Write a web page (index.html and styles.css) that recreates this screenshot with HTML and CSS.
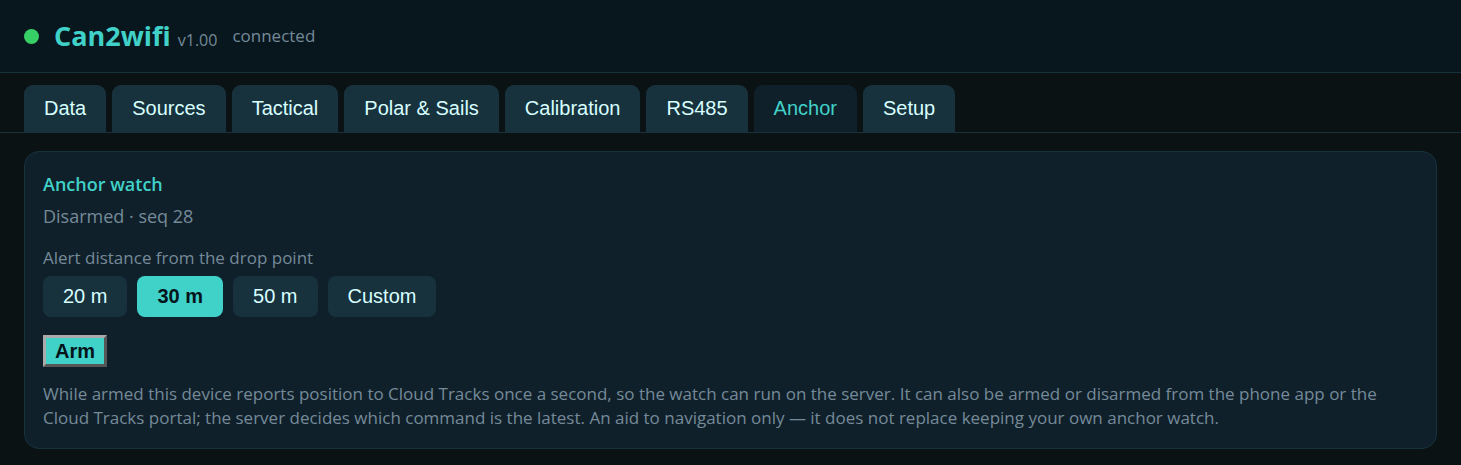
FILE: index.html
```
<!DOCTYPE html>
<html lang="en">
<head>
    <meta charset="UTF-8">
    <meta name="viewport" content="width=device-width, initial-scale=1.0">
    <title>Can2wifi</title>
    <link rel="stylesheet" href="styles.css">
</head>
<body>
    <header>
        <span class="dot"></span>
        <h1>Can2wifi <small>v1.00</small></h1>
        <span class="status">connected</span>
    </header>

    <nav class="tabs">
        <button type="button">Data</button>
        <button type="button">Sources</button>
        <button type="button">Tactical</button>
        <button type="button">Polar &amp; Sails</button>
        <button type="button">Calibration</button>
        <button type="button">RS485</button>
        <button type="button" class="active">Anchor</button>
        <button type="button">Setup</button>
    </nav>

    <main>
        <section class="card">
            <h2>Anchor watch</h2>
            <p class="state">Disarmed · seq 28</p>
            <p class="label" id="radiusLabel">Alert distance from the drop point</p>
            <div class="radius" role="group" aria-labelledby="radiusLabel">
                <button type="button">20 m</button>
                <button type="button" class="active">30 m</button>
                <button type="button">50 m</button>
                <button type="button">Custom</button>
            </div>
            <button type="button" class="arm">Arm</button>
            <p class="note">While armed this device reports position to Cloud Tracks once a second, so the watch can run on the server. It can also be armed or disarmed from the phone app or the Cloud Tracks portal; the server decides which command is the latest. An aid to navigation only — it does not replace keeping your own anchor watch.</p>
        </section>
    </main>

    <script>
        // One active button per group
        document.querySelectorAll('.tabs, .radius').forEach(group => {
            group.addEventListener('click', event => {
                if (event.target.tagName !== 'BUTTON') return;
                group.querySelector('.active').classList.remove('active');
                event.target.classList.add('active');
            });
        });
    </script>
</body>
</html>
```
FILE: styles.css
```
* {
    box-sizing: border-box;
}

body {
    margin: 0;
    background: #0a1214;
    color: #d8ffff;
    font-family: "Segoe UI", "Open Sans", sans-serif;
    font-size: 17px;
    line-height: 24px;
}

h1, h2, p {
    margin: 0;
}

header {
    display: flex;
    align-items: center;
    gap: 15px;
    padding: 18px 24px;
    background: #08171e;
    border-bottom: 1px solid #17323d;
}

.dot {
    width: 15px;
    height: 15px;
    border-radius: 50%;
    background: #37d067;
}

h1 {
    font-size: 27px;
    line-height: 36px;
    color: #40d1c9;
}

h1 small {
    font-size: 16px;
    line-height: 16px;
    font-weight: normal;
    color: #758a99;
}

.status, .state, .label, .note {
    color: #758a99;
}

button {
    font-family: Arial, "Liberation Sans", sans-serif;
    font-size: 20px;
    line-height: 23px;
    cursor: pointer;
}

.tabs {
    display: flex;
    flex-wrap: wrap;
    gap: 6px;
    padding: 12px 24px 0;
    border-bottom: 1px solid #17323d;
}

.tabs button {
    padding: 12px 20px;
    border: none;
    border-radius: 9px 9px 0 0;
    background: #17323d;
    color: #d8ffff;
}

.tabs .active {
    background: #10202a;
    color: #40d1c9;
}

main {
    padding: 18px 24px 16px;
}

.card {
    padding: 18px;
    background: #10202a;
    border: 1px solid #17323d;
    border-radius: 15px;
}

h2 {
    font-size: 18px;
    line-height: 28px;
    font-weight: 600;
    color: #40d1c9;
}

.state {
    font-size: 18px;
    line-height: 36px;
}

.label {
    margin-top: 12px;
}

.radius {
    display: flex;
    flex-wrap: wrap;
    gap: 10px;
    margin: 6px 0 18px;
}

.radius button {
    padding: 9px 20px;
    border: none;
    border-radius: 8px;
    background: #17323d;
    color: #d8ffff;
}

.radius .active {
    background: #40d1c9;
    color: #04141a;
    font-weight: bold;
}

.arm {
    padding: 2px 9px;
    border: 3px outset #aaa;
    background: #40d1c9;
    color: #04141a;
    font-weight: bold;
    line-height: 22px;
}

.note {
    margin-top: 15px;
}
```
